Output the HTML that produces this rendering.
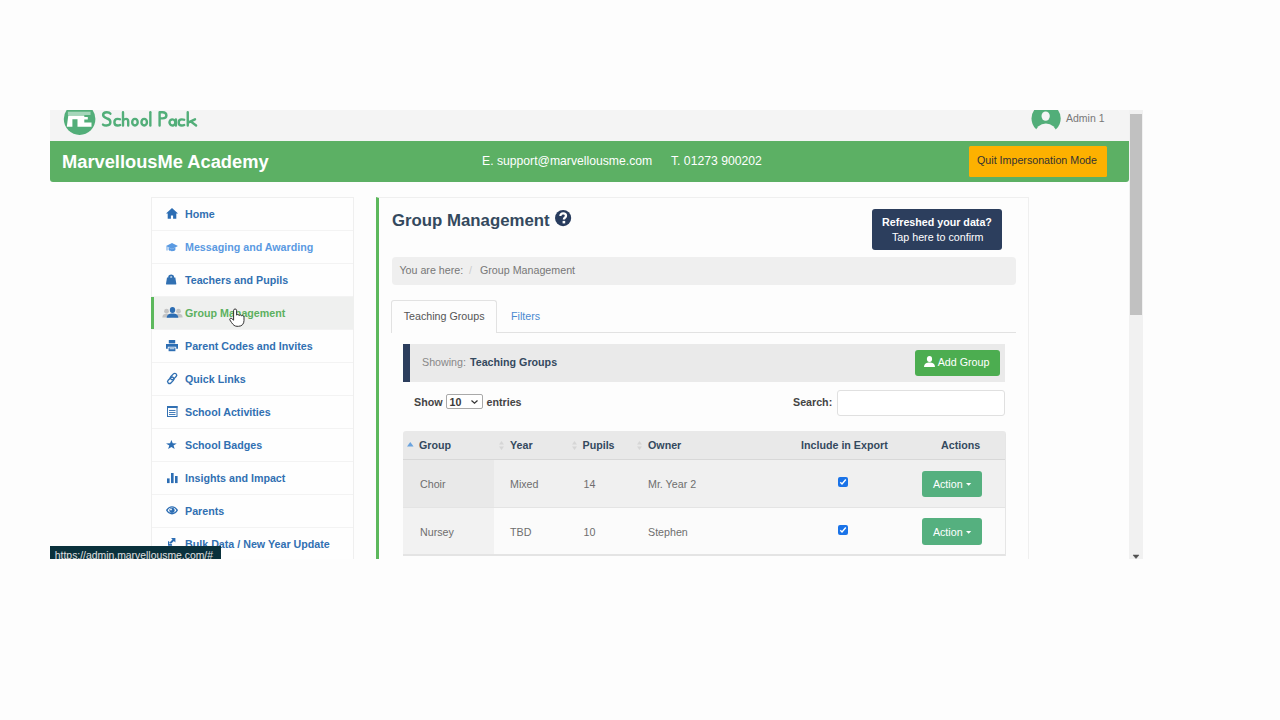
<!DOCTYPE html>
<html><head><meta charset="utf-8">
<style>
*{margin:0;padding:0;box-sizing:border-box}
html,body{width:1280px;height:720px;overflow:hidden;background:#fdfdfd;font-family:"Liberation Sans",sans-serif}
.a{position:absolute}
.t{position:absolute;white-space:nowrap;line-height:1}
#pg{position:absolute;left:0;top:0;width:1280px;height:720px;clip-path:inset(110px 137px 161px 50px);background:#fdfdfd}
.b{font-weight:bold}
.nav{color:#3170b2;font-weight:bold;font-size:10.7px}
.sep{position:absolute;left:152px;width:201px;height:1px;background:#f3f3f3}
.th{color:#34495e;font-weight:bold;font-size:10.7px}
.td{color:#6e6e6e;font-size:10.7px}
svg{position:absolute;overflow:visible}
</style></head><body>
<div id="pg">
  <!-- header -->
  <div class="a" style="left:50px;top:110px;width:1079px;height:31px;background:#f4f4f4"></div>
  <!-- logo -->
  <svg style="left:62.5px;top:103px" width="33" height="33" viewBox="0 0 33 33">
    <circle cx="16.6" cy="16.1" r="15.8" fill="#52ae79"/>
    <rect x="4.9" y="8.7" width="22.6" height="3.3" fill="#a5d6ba"/>
    <path d="M3.8 23.7 L5.3 12.6 H21.3 V13.9 H24.8 V16.6 H21.3 V19.4 H28.5 V23.7 H14.5 V16.3 H9.4 V23.7 Z" fill="#fff"/>
  </svg>
  <svg style="left:0;top:0" width="1" height="1"><g fill="none" stroke="#52ae79" stroke-width="2.4" stroke-linecap="round" stroke-linejoin="round">
    <path d="M110.4 113.7 C109.7 112.6 108.5 112.2 106.8 112.2 C104.4 112.2 103.1 113.3 103.1 115.0 C103.1 117.2 105.4 117.8 107.3 118.5 C109.4 119.2 110.4 120.1 110.4 122.1 C110.4 124.3 108.7 125.5 106.4 125.5 C104.9 125.5 103.7 125.2 103.0 124.6"/>
    <path d="M120.0 119.3 C119.4 119.0 118.8 118.9 117.6 118.9 C115.4 118.9 114.4 120.2 114.4 122.2 C114.4 124.3 115.5 125.5 117.6 125.5 C118.8 125.5 119.6 125.3 120.1 125.0"/>
    <path d="M123 112.2 V125.5 M123 120.8 C123.6 119.5 124.7 118.9 126 118.9 C127.6 118.9 128.2 119.9 128.2 121.4 V125.5"/>
    <ellipse cx="134.95" cy="122.2" rx="2.75" ry="3.3"/>
    <ellipse cx="144.2" cy="122.2" rx="2.75" ry="3.3"/>
    <path d="M150.35 112.2 V125.5"/>
    <path d="M159.6 125.5 V112.2 H162.5 C165.3 112.2 166.4 113.6 166.4 115.5 C166.4 117.3 165 118.4 162.5 118.4 H159.6"/>
    <ellipse cx="172.4" cy="122.45" rx="2.9" ry="3.05" transform="rotate(-20 172.4 122.45)"/>
    <path d="M175.9 119.4 V125.5"/>
    <path d="M184.2 119.7 C183.7 119.4 183 119.4 181.8 119.4 C179.7 119.4 178.7 120.6 178.7 122.4 C178.7 124.3 179.7 125.5 181.8 125.5 C183 125.5 183.7 125.3 184.2 125.0"/>
    <path d="M187.75 112.2 V125.5 M188 122.6 L195 119.3 M190.6 121.4 L196.1 125.5"/>
  </g></svg>
  <!-- avatar -->
  <svg style="left:1030px;top:103px" width="32" height="32" viewBox="0 0 32 32">
    <defs><mask id="mm"><rect x="0" y="0" width="32" height="32" fill="#fff"/><ellipse cx="15.65" cy="13.1" rx="4.15" ry="4.7" fill="#000"/><ellipse cx="15.9" cy="29.5" rx="10.4" ry="9" fill="#000"/></mask></defs>
    <circle cx="16.1" cy="15.5" r="14.6" fill="#52ae79" mask="url(#mm)"/>
  </svg>
  <div class="t" style="left:1066px;top:112.9px;font-size:10.5px;color:#777">Admin 1</div>

  <!-- green bar -->
  <div class="a" style="left:50px;top:141px;width:1079px;height:41px;background:#5cb064;border-radius:0 0 3px 3px"></div>
  <div class="t b" style="left:62px;top:152.5px;font-size:18.3px;color:#fff">MarvellousMe Academy</div>
  <div class="t" style="left:482px;top:155.3px;font-size:12.2px;color:#fff">E. support@marvellousme.com</div>
  <div class="t" style="left:671px;top:155.3px;font-size:12.2px;color:#fff">T. 01273 900202</div>
  <div class="a" style="left:969px;top:146px;width:138px;height:31px;background:#fdb100;border-radius:1.5px"></div>
  <div class="t" style="left:977px;top:155.2px;font-size:10.7px;color:#333">Quit Impersonation Mode</div>

  <!-- sidebar -->
  <div class="a" style="left:151px;top:197px;width:203px;height:400px;background:#fefefe;border:1px solid #efefef"></div>
  <div class="sep" style="top:230px"></div>
  <div class="sep" style="top:263px"></div>
  <div class="sep" style="top:296px"></div>
  <div class="sep" style="top:329px"></div>
  <div class="sep" style="top:362px"></div>
  <div class="sep" style="top:395px"></div>
  <div class="sep" style="top:428px"></div>
  <div class="sep" style="top:461px"></div>
  <div class="sep" style="top:494px"></div>
  <div class="sep" style="top:527px"></div>
  <div class="a" style="left:151px;top:297px;width:203px;height:32px;background:#eff0ef;border-left:3px solid #5cb85c"></div>

  <!-- nav icons -->
  <svg style="left:166px;top:208px" width="12" height="11" viewBox="0 0 12 11"><path d="M6 0 L12 5.4 H10.3 V10.8 H7.1 V7.6 H4.9 V10.8 H1.7 V5.4 H0 Z" fill="#2c6db3"/></svg>
  <svg style="left:165.5px;top:243px" width="12" height="9" viewBox="0 0 12 9"><path d="M0 3 L6 0 L12 3 L6 6 Z M2.6 4.4 L6 6.2 L9.4 4.4 V7 C8 8.6 4 8.6 2.6 7 Z" fill="#5a9ae2"/><path d="M1 3.3 V7.5" stroke="#5a9ae2" stroke-width="0.9"/></svg>
  <svg style="left:166.2px;top:274.4px" width="11" height="11" viewBox="0 0 11 11"><path d="M3.2 4.2 V2.7 C3.2 0.9 7.1 0.9 7.1 2.7 V4.2" stroke="#3170b2" stroke-width="1.9" fill="none"/><path d="M1 3.6 H9.3 L10.3 9.8 C10.3 10.4 10 10.6 9.5 10.6 H0.8 C0.3 10.6 0 10.4 0 9.8 Z" fill="#3170b2"/></svg>
  <svg style="left:161.5px;top:306.8px" width="21" height="11" viewBox="0 0 21 11"><g fill="#c4c4c4"><circle cx="4.5" cy="4.2" r="2.4"/><path d="M0.3 10.5 C0.6 7.5 2 6.8 4.5 6.8 C7 6.8 8.4 7.5 8.7 10.5 Z"/><circle cx="16.5" cy="4.2" r="2.4"/><path d="M12.3 10.5 C12.6 7.5 14 6.8 16.5 6.8 C19 6.8 20.4 7.5 20.7 10.5 Z"/></g><g fill="#2c6db3"><ellipse cx="10.5" cy="3" rx="2.7" ry="3"/><path d="M4.7 10.7 C5 7.6 7 6.6 10.5 6.6 C14 6.6 16 7.6 16.3 10.7 Z"/></g></svg>
  <svg style="left:165.7px;top:340px" width="12" height="12" viewBox="0 0 12 12"><g fill="#2c6db3"><rect x="2.8" y="0" width="6.4" height="3.4"/><path d="M0 4 H12 V8.8 H10.2 V6.8 H1.8 V8.8 H0 Z"/><rect x="2.6" y="7.6" width="6.8" height="3.6"/></g><rect x="3.6" y="8.4" width="4.8" height="0.8" fill="#fff"/></svg>
  <svg style="left:166.5px;top:373px" width="11" height="11" viewBox="0 0 11 11"><g fill="none" stroke="#3170b2" stroke-width="1.35"><rect x="4.6" y="-0.2" width="3.8" height="7.4" rx="1.9" transform="rotate(45 6.5 3.5)"/><rect x="1.9" y="3.6" width="3.8" height="7.4" rx="1.9" transform="rotate(45 3.8 7.3)"/></g></svg>
  <svg style="left:167px;top:406px" width="11" height="11" viewBox="0 0 11 11"><rect x="0.5" y="0.5" width="9.5" height="10" fill="none" stroke="#3170b2" stroke-width="1"/><rect x="0" y="0" width="10.5" height="2" fill="#3170b2"/><g fill="#3170b2"><rect x="2" y="4" width="6.5" height="0.9"/><rect x="2" y="6" width="6.5" height="0.9"/><rect x="2" y="8" width="6.5" height="0.9"/></g></svg>
  <svg style="left:166px;top:439.8px" width="11" height="9" viewBox="0 0 11 9"><path d="M5.4 0 L6.7 3.3 L10.8 3.4 L7.5 5.6 L8.7 9 L5.4 6.9 L2.1 9 L3.3 5.6 L0 3.4 L4.1 3.3 Z" fill="#2c6db3"/></svg>
  <svg style="left:166.7px;top:473px" width="11" height="10" viewBox="0 0 11 10"><g fill="#2c6db3"><rect x="0" y="5.4" width="2.6" height="4.7"/><rect x="4" y="0" width="2.6" height="10.1"/><rect x="8" y="3" width="2.6" height="7.1"/></g></svg>
  <svg style="left:165.6px;top:506.3px" width="12" height="9" viewBox="0 0 12 9"><path d="M0 4.3 C2.5 -1.2 9.5 -1.2 12 4.3 C9.5 9.8 2.5 9.8 0 4.3 Z" fill="#2c6db3"/><path d="M1.6 4.3 C3.6 0.6 8.4 0.6 10.4 4.3 C8.4 8 3.6 8 1.6 4.3 Z" fill="#fff"/><circle cx="6" cy="4.3" r="2.6" fill="#2c6db3"/><circle cx="5" cy="3.4" r="0.9" fill="#fff"/></svg>
  <svg style="left:168.3px;top:538.3px" width="8" height="8" viewBox="0 0 8 8"><path d="M3 0 H7.4 V4.4 L5.9 2.9 L2.2 6.6 L0.8 5.2 L4.5 1.5 Z M0 3 V7.4 H4.4" fill="#2c6db3"/><path d="M0.6 3.5 V6.9 H4" stroke="#2c6db3" stroke-width="1.2" fill="none"/></svg>

  <div class="t nav" style="left:185px;top:208.5px">Home</div>
  <div class="t nav" style="left:185px;top:241.5px;color:#5a9ae2">Messaging and Awarding</div>
  <div class="t nav" style="left:185px;top:274.5px">Teachers and Pupils</div>
  <div class="t nav" style="left:185px;top:307.5px;color:#5cb060">Group Management</div>
  <div class="t nav" style="left:185px;top:340.5px">Parent Codes and Invites</div>
  <div class="t nav" style="left:185px;top:373.5px">Quick Links</div>
  <div class="t nav" style="left:185px;top:406.5px">School Activities</div>
  <div class="t nav" style="left:185px;top:439.5px">School Badges</div>
  <div class="t nav" style="left:185px;top:472.5px">Insights and Impact</div>
  <div class="t nav" style="left:185px;top:505.5px">Parents</div>
  <div class="t nav" style="left:185px;top:538.5px">Bulk Data / New Year Update</div>

  <!-- main -->
  <div class="a" style="left:376px;top:197px;width:653px;height:400px;background:#fdfdfd;border:1px solid #efefef;border-left:3px solid #5cb85c"></div>
  <div class="t b" style="left:392px;top:213px;font-size:16.8px;color:#34495e">Group Management</div>
  <svg style="left:554.8px;top:209.6px" width="16.2" height="16.2" viewBox="0 0 16.2 16.2"><circle cx="8.1" cy="8.1" r="8.1" fill="#283c5e"/><path d="M5.4 6.1 C5.4 4.2 6.6 3.3 8.2 3.3 C9.9 3.3 11 4.3 11 5.7 C11 7.5 8.9 7.6 8.9 9.4" stroke="#fff" stroke-width="2.3" fill="none"/><rect x="7.6" y="10.9" width="2.6" height="2.5" fill="#fff"/></svg>

  <div class="a" style="left:872px;top:209px;width:130px;height:41px;background:#2c3e5d;border-radius:3px"></div>
  <div class="t b" style="left:882px;top:217px;font-size:10.7px;color:#fff">Refreshed your data?</div>
  <div class="t" style="left:892px;top:231.9px;font-size:10.7px;color:#fff">Tap here to confirm</div>

  <div class="a" style="left:392px;top:257px;width:624px;height:28px;background:#efefef;border-radius:4px"></div>
  <div class="t" style="left:399.4px;top:265.3px;font-size:10.7px;color:#777">You are here:</div>
  <div class="t" style="left:469px;top:265.3px;font-size:10.7px;color:#ccc">/</div>
  <div class="t" style="left:480px;top:265.3px;font-size:10.7px;color:#777">Group Management</div>

  <!-- tabs -->
  <div class="a" style="left:391px;top:332px;width:625px;height:1px;background:#e2e2e2"></div>
  <div class="a" style="left:391px;top:300px;width:106px;height:33px;background:#fdfdfd;border:1px solid #e2e2e2;border-bottom:none;border-radius:3px 3px 0 0"></div>
  <div class="t" style="left:403.7px;top:310.6px;font-size:10.7px;color:#555">Teaching Groups</div>
  <div class="t" style="left:511px;top:310.6px;font-size:10.7px;color:#4a8ad0">Filters</div>

  <!-- showing bar -->
  <div class="a" style="left:403px;top:344px;width:602px;height:38px;background:#eaeaea;border-left:7px solid #2c3e5d"></div>
  <div class="t" style="left:422px;top:356.5px;font-size:10.7px;color:#888">Showing:</div>
  <div class="t b" style="left:470px;top:356.5px;font-size:10.7px;color:#34495e">Teaching Groups</div>
  <div class="a" style="left:915px;top:350px;width:85px;height:25.5px;background:#4cad50;border-radius:3px"></div>
  <svg style="left:924px;top:356.3px" width="11" height="11" viewBox="0 0 11 11"><ellipse cx="5.5" cy="3" rx="2.6" ry="3" fill="#fff"/><path d="M0 11 C0.3 7.6 2.4 6.6 5.5 6.6 C8.6 6.6 10.7 7.6 11 11 Z" fill="#fff"/></svg>
  <div class="t" style="left:937.7px;top:357.4px;font-size:10.7px;color:#fff">Add Group</div>

  <!-- show entries -->
  <div class="t b" style="left:414px;top:396.6px;font-size:10.7px;color:#444">Show</div>
  <div class="a" style="left:446px;top:394px;width:37px;height:15px;background:#fff;border:1px solid #a9a9a9;border-radius:2px"></div>
  <div class="t b" style="left:449.5px;top:396.9px;font-size:10.7px;color:#3a3a3a">10</div>
  <svg style="left:471.3px;top:400.3px" width="7" height="4" viewBox="0 0 7 4"><path d="M0.5 0.5 L3.5 3.3 L6.5 0.5" stroke="#333" stroke-width="1.2" fill="none"/></svg>
  <div class="t b" style="left:486.5px;top:396.6px;font-size:10.7px;color:#444">entries</div>
  <div class="t b" style="left:793px;top:396.6px;font-size:10.7px;color:#444">Search:</div>
  <div class="a" style="left:837px;top:390px;width:168px;height:26px;background:#fff;border:1px solid #e0e0e0;border-radius:3px"></div>

  <!-- table -->
  <div class="a" style="left:403px;top:431px;width:603px;height:29px;background:#e9e9e9;border-bottom:1px solid #d8d8d8;border-radius:3px 3px 0 0"></div>
  <div class="a" style="left:403px;top:460px;width:603px;height:48px;background:#f0f0f0"></div>
  <div class="a" style="left:403px;top:460px;width:91px;height:48px;background:#e9e9e9"></div>
  <div class="a" style="left:403px;top:507px;width:603px;height:1px;background:#e4e4e4"></div>
  <div class="a" style="left:403px;top:508px;width:603px;height:47px;background:#fbfbfb"></div>
  <div class="a" style="left:403px;top:508px;width:91px;height:47px;background:#f2f2f2"></div>
  <div class="a" style="left:403px;top:554px;width:603px;height:2px;background:#e4e4e4"></div>
  <div class="a" style="left:1005px;top:434px;width:1px;height:122px;background:#e6e6e6"></div>
  <svg style="left:407.2px;top:441.7px" width="6.6" height="4.4" viewBox="0 0 6.6 4.4"><path d="M3.3 0 L6.6 4.4 H0 Z" fill="#6aa3de"/></svg>
  <svg style="left:499.3px;top:441.3px" width="5" height="9" viewBox="0 0 5 9"><path d="M2.5 0 L5 3.6 H0 Z M2.5 9 L5 5.4 H0 Z" fill="#d6d6d6"/></svg>
  <svg style="left:572.3px;top:441.3px" width="5" height="9" viewBox="0 0 5 9"><path d="M2.5 0 L5 3.6 H0 Z M2.5 9 L5 5.4 H0 Z" fill="#d6d6d6"/></svg>
  <svg style="left:637.4px;top:441.3px" width="5" height="9" viewBox="0 0 5 9"><path d="M2.5 0 L5 3.6 H0 Z M2.5 9 L5 5.4 H0 Z" fill="#d6d6d6"/></svg>

  <div class="t th" style="left:419px;top:440px">Group</div>
  <div class="t th" style="left:510px;top:440px">Year</div>
  <div class="t th" style="left:582.5px;top:440px">Pupils</div>
  <div class="t th" style="left:648px;top:440px">Owner</div>
  <div class="t th" style="left:801px;top:440px">Include in Export</div>
  <div class="t th" style="left:941px;top:440px">Actions</div>

  <div class="t td" style="left:420px;top:479px">Choir</div>
  <div class="t td" style="left:510px;top:479px">Mixed</div>
  <div class="t td" style="left:583.5px;top:479px">14</div>
  <div class="t td" style="left:648px;top:479px">Mr. Year 2</div>
  <div class="t td" style="left:420px;top:527px">Nursey</div>
  <div class="t td" style="left:510px;top:527px">TBD</div>
  <div class="t td" style="left:583.5px;top:527px">10</div>
  <div class="t td" style="left:648px;top:527px">Stephen</div>

  <svg style="left:838px;top:477px" width="10" height="10" viewBox="0 0 10 10"><rect width="10" height="10" rx="2" fill="#1a73e8"/><path d="M2.3 5.3 L4 7 L7.8 2.5" stroke="#fff" stroke-width="1.4" fill="none"/></svg>
  <svg style="left:838px;top:525px" width="10" height="10" viewBox="0 0 10 10"><rect width="10" height="10" rx="2" fill="#1a73e8"/><path d="M2.3 5.3 L4 7 L7.8 2.5" stroke="#fff" stroke-width="1.4" fill="none"/></svg>
  <div class="a" style="left:922.3px;top:470.6px;width:59.5px;height:26px;background:#55b07f;border-radius:3px"></div>
  <div class="a" style="left:922.3px;top:518px;width:59.5px;height:26.5px;background:#55b07f;border-radius:3px"></div>
  <div class="t" style="left:932.9px;top:478.6px;font-size:10.7px;color:#fff">Action</div>
  <div class="t" style="left:932.9px;top:526.6px;font-size:10.7px;color:#fff">Action</div>
  <svg style="left:965.7px;top:483.2px" width="5.3" height="2.8" viewBox="0 0 5.3 2.8"><path d="M0 0 H5.3 L2.65 2.8 Z" fill="#fff"/></svg>
  <svg style="left:965.7px;top:531.2px" width="5.3" height="2.8" viewBox="0 0 5.3 2.8"><path d="M0 0 H5.3 L2.65 2.8 Z" fill="#fff"/></svg>

  <!-- status bar -->
  <div class="a" style="left:50px;top:546px;width:170.5px;height:13px;background:#0a313c"></div>
  <div class="t" style="left:54.8px;top:551.4px;font-size:10.4px;color:#e0e0e0">https://admin.marvellousme.com/#</div>
  <!-- cursor -->
  <svg style="left:228.8px;top:308.2px" width="16" height="19" viewBox="0 0 16 19"><path d="M4.6 2.2 C4.6 0.6 7.6 0.6 7.6 2.2 V7.2 C7.8 6.2 10 6.2 10.2 7.6 C10.4 6.6 12.5 6.7 12.6 8 C12.9 7.2 15 7.4 15 9 V12.5 C15 15.8 13 18.3 9.5 18.3 H8 C5.8 18.3 4.2 17 2.6 14.6 L0.9 12 C0.2 10.9 1.6 9.6 2.8 10.6 L4.6 12.2 Z" fill="#fff" stroke="#333" stroke-width="1"/></svg>
</div>
<!-- scrollbar -->
<div class="a" style="left:1129px;top:110px;width:14px;height:449px;background:#f1f1f1"></div>
<div class="a" style="left:1130px;top:114px;width:12px;height:201px;background:#c1c1c1"></div>
<svg style="left:1133.3px;top:555px" width="6" height="3.5" viewBox="0 0 6 3.5"><path d="M0 0 H6 L3 3.5 Z" fill="#505050" stroke="#505050" stroke-width="0.5" stroke-linejoin="round"/></svg>
</body></html>
